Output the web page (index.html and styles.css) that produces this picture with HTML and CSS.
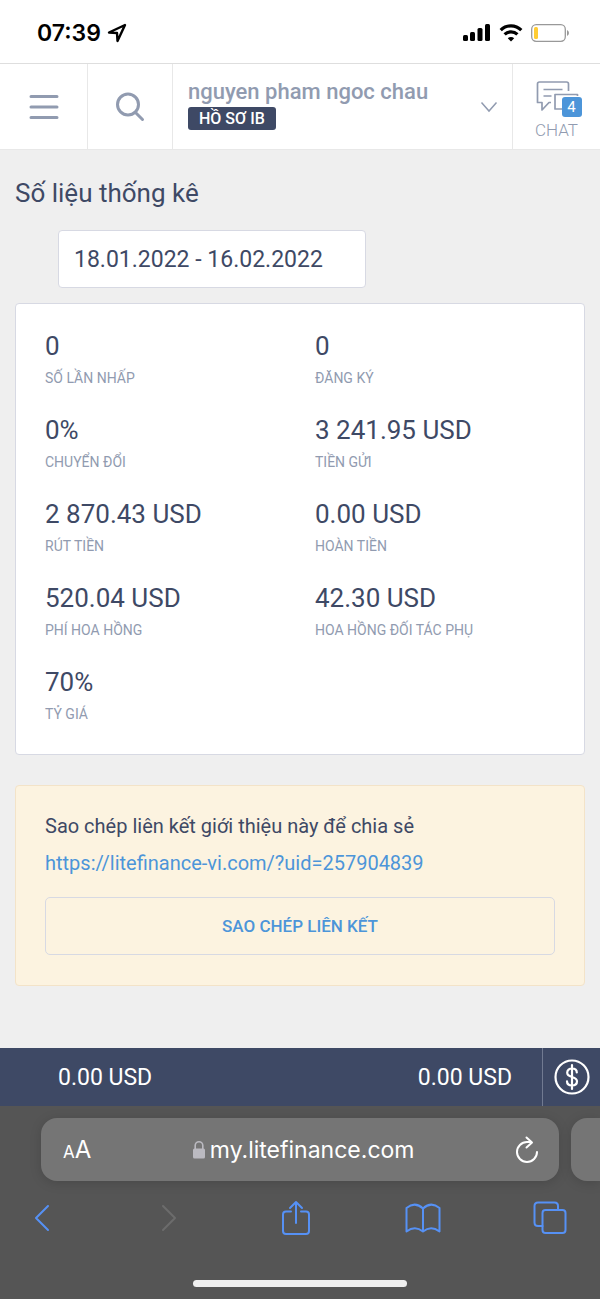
FILE: index.html
```
<!DOCTYPE html>
<html lang="vi">
<head>
    <meta charset="UTF-8">
    <meta name="viewport" content="width=device-width, initial-scale=1.0">
    <title>Số liệu thống kê</title>
    <link rel="stylesheet" href="styles.css">
</head>
<body>
    <div class="status-bar">
        <div class="status-time">
            <span>07:39</span>
            <svg width="20" height="20" viewBox="0 0 20 20" fill="none" stroke="#000" stroke-width="2.4" stroke-linejoin="round"><path d="M18 2L2 9.500l8 .5.500 8z"/></svg>
        </div>
        <div class="status-icons">
            <svg width="28" height="18" viewBox="0 0 28 18"><rect x="0" y="11" width="5" height="6" rx="1.5"/><rect x="7" y="8" width="5" height="9" rx="1.5"/><rect x="14.5" y="4" width="5" height="13" rx="1.5"/><rect x="22" y="0" width="5" height="17" rx="1.5"/></svg>
            <svg width="24" height="18" viewBox="0 0 24 18" fill="none" stroke="#000" stroke-width="3.2"><path d="M1.7 6.2a14.500 14.500 0 0 1 20.6 0"/><path d="M5.6 10.400a9.200 9.200 0 0 1 12.800 0"/><path d="M12 17.500l-3.200-3.200a4.500 4.500 0 0 1 6.400 0z" fill="#000" stroke="none"/></svg>
            <svg width="39" height="18" viewBox="0 0 39 18"><rect x=".7" y=".7" width="33.6" height="16.6" rx="4.5" fill="none" stroke="#999" stroke-width="1.3"/><rect x="3" y="3" width="4" height="12" rx="1.5" fill="#fc3"/><path d="M36 6q2 1 2 3t-2 3z" fill="#999"/></svg>
        </div>
    </div>

    <header class="header">
        <button class="header-button" type="button" aria-label="Menu">
            <svg width="30" height="26" viewBox="0 0 30 26" stroke="#919bb0" stroke-width="3" stroke-linecap="round"><path d="M2 2.500h26M2 13h26M2 23.500h26"/></svg>
        </button>
        <button class="header-button" type="button" aria-label="Tìm kiếm">
            <svg width="30" height="30" viewBox="0 0 30 30" fill="none" stroke="#919bb0" stroke-width="3" stroke-linecap="round"><circle cx="13" cy="12.500" r="10.500"/><path d="M20.500 20.500l7 7"/></svg>
        </button>
        <button class="profile" type="button">
            <span class="profile-info">
                <span class="profile-name">nguyen pham ngoc chau</span>
                <span class="profile-tag">HỒ SƠ IB</span>
            </span>
            <svg width="18" height="12" viewBox="0 0 18 12" fill="none" stroke="#919bb0" stroke-width="1.5"><path d="M1.5 1.500L9 10l7.500-8.500"/></svg>
        </button>
        <button class="header-button chat" type="button">
            <span class="chat-icon">
                <svg width="44" height="32" viewBox="0 0 44 32" fill="none" stroke="#919bb0" stroke-width="1.7" stroke-linejoin="round"><path d="M33.500 11V4q0-2-2-2h-27q-2 0-2 2v18.500H7V30l7-7.500h2M8.500 9.500h19M8.500 16h8"/><path d="M42.500 16v-1.500H20v14.500h14"/></svg>
                <span class="chat-count">4</span>
            </span>
            <span>CHAT</span>
        </button>
    </header>

    <main class="content">
        <h1>Số liệu thống kê</h1>
        <input class="date-range" type="text" value="18.01.2022 - 16.02.2022" aria-label="Khoảng thời gian">

        <dl class="stats">
            <div class="stat"><dd>0</dd><dt>SỐ LẦN NHẤP</dt></div>
            <div class="stat"><dd>0</dd><dt>ĐĂNG KÝ</dt></div>
            <div class="stat"><dd>0%</dd><dt>CHUYỂN ĐỔI</dt></div>
            <div class="stat"><dd>3 241.95 USD</dd><dt>TIỀN GỬI</dt></div>
            <div class="stat"><dd>2 870.43 USD</dd><dt>RÚT TIỀN</dt></div>
            <div class="stat"><dd>0.00 USD</dd><dt>HOÀN TIỀN</dt></div>
            <div class="stat"><dd>520.04 USD</dd><dt>PHÍ HOA HỒNG</dt></div>
            <div class="stat"><dd>42.30 USD</dd><dt>HOA HỒNG ĐỐI TÁC PHỤ</dt></div>
            <div class="stat"><dd>70%</dd><dt>TỶ GIÁ</dt></div>
        </dl>

        <section class="referral">
            <p>Sao chép liên kết giới thiệu này để chia sẻ</p>
            <a href="https://litefinance-vi.com/?uid=257904839">https://litefinance-vi.com/?uid=257904839</a>
            <button type="button">SAO CHÉP LIÊN KẾT</button>
        </section>
    </main>

    <div class="balance-bar">
        <span>0.00 USD</span>
        <span>0.00 USD</span>
        <button type="button" aria-label="Nạp tiền">
            <svg width="36" height="36" viewBox="0 0 36 36" fill="none" stroke="#fff" stroke-width="2.2" stroke-linecap="round"><circle cx="18" cy="18" r="16.500"/><path d="M18 6v24M22.800 13.500c0-2.500-2-4-4.800-4s-4.800 1.500-4.800 4.200c0 5.600 9.800 3 9.800 8.600 0 2.700-2.200 4.200-5 4.200s-5-1.500-5-4.200"/></svg>
        </button>
    </div>

    <footer class="browser">
        <div class="tabs">
            <div class="address">
                <button class="text-size" type="button"><small>A</small>A</button>
                <span class="site">
                    <svg width="14" height="20" viewBox="0 0 14 20"><path d="M3.200 9V5.500a3.800 3.800 0 0 1 7.600 0V9" fill="none" stroke="#bbbac1" stroke-width="1.6"/><rect x="1" y="8.500" width="12" height="10" rx="1.5" fill="#bbbac1"/></svg>
                    my.litefinance.com
                </span>
                <button type="button" aria-label="Tải lại">
                    <svg width="24" height="28" viewBox="0 0 24 28" fill="none" stroke="#fff" stroke-width="2" stroke-linecap="round" stroke-linejoin="round"><path d="M22 16a10 10 0 1 1-10-10h4.500M11.500 1.500L17 6.500l-5.500 5"/></svg>
                </button>
            </div>
            <div class="next-tab"></div>
        </div>
        <nav class="toolbar">
            <button type="button" aria-label="Quay lại">
                <svg width="18" height="30" viewBox="0 0 18 30"><path d="M15 3L3 15l12 12"/></svg>
            </button>
            <button class="disabled" type="button" aria-label="Tiếp" disabled>
                <svg width="18" height="30" viewBox="0 0 18 30"><path d="M3 3l12 12L3 27"/></svg>
            </button>
            <button type="button" aria-label="Chia sẻ">
                <svg width="30" height="36" viewBox="0 0 30 36"><path d="M10 11.500H5q-3 0-3 3V31q0 3 3 3h20q3 0 3-3V14.500q0-3-3-3h-5M15 23V2M9 8l6-6 6 6"/></svg>
            </button>
            <button type="button" aria-label="Dấu trang">
                <svg width="36" height="30" viewBox="0 0 36 30"><path d="M18 5.500Q10-2 1.500 5v23.500Q10 22 18 28.500 26 22 34.500 28.500V5Q26-2 18 5.500zV28"/></svg>
            </button>
            <button type="button" aria-label="Các thẻ">
                <svg width="34" height="34" viewBox="0 0 34 34"><rect x="9.500" y="9" width="23" height="23" rx="3"/><path d="M9.500 25H5q-3.500 0-3.500-3.500V5Q1.500 1.500 5 1.500h16.500Q25 1.500 25 5v4"/></svg>
            </button>
        </nav>
        <div class="home-indicator"></div>
    </footer>
</body>
</html>
```
FILE: styles.css
```
* {
    box-sizing: border-box;
}

body {
    display: flex;
    flex-direction: column;
    min-height: 100vh;
    margin: 0;
    font-family: Roboto, "Liberation Sans", sans-serif;
    background-color: #efefef;
    color: #3e4965;
}

button {
    padding: 0;
    border: none;
    background: none;
    color: inherit;
    font-family: inherit;
    cursor: pointer;
}

svg {
    display: block;
    flex: none;
}

.status-bar {
    display: flex;
    justify-content: space-between;
    align-items: center;
    height: 64px;
    padding: 2px 30px 0 37px;
    background: #fff;
    border-bottom: 1px solid #dedede;
}

.status-time {
    display: flex;
    align-items: center;
    gap: 6px;
    color: #000;
    font-family: Inter, sans-serif;
    font-size: 23px;
    font-weight: 600;
}

.status-icons {
    display: flex;
    gap: 8px;
}

.header {
    display: grid;
    grid-template-columns: 88px 85px 1fr 87px;
    height: 86px;
    background: #fff;
    border-bottom: 1px solid #e8e8e8;
}

.header-button {
    display: flex;
    justify-content: center;
    align-items: center;
    color: #919bb0;
    border-right: 1px solid #e8e8e8;
}

.profile {
    display: flex;
    justify-content: space-between;
    align-items: center;
    padding: 0 14px 0 15px;
    border-right: 1px solid #e8e8e8;
}

.profile-info {
    display: flex;
    flex-direction: column;
    align-items: flex-start;
    gap: 2px;
    padding-bottom: 4px;
}

.profile-name {
    color: #919bb0;
    font-size: 22px;
    font-weight: 500;
    line-height: 26px;
}

.profile-tag {
    padding: 0 11px;
    border-radius: 3px;
    background: #3e4965;
    color: #fff;
    font-size: 16px;
    font-weight: 500;
    line-height: 23px;
}

.chat {
    flex-direction: column;
    gap: 8px;
    padding-top: 6px;
    border-right: none;
    font-size: 17px;
    font-weight: 300;
    line-height: 20px;
}

.chat-icon {
    position: relative;
}

.chat-count {
    position: absolute;
    right: -3px;
    bottom: -5px;
    width: 20px;
    border-radius: 3px;
    background: #4c95d9;
    color: #fff;
    font-size: 15px;
    font-weight: 400;
}

.content {
    padding: 28px 15px;
}

h1 {
    margin: 0 0 22px;
    font-size: 26px;
    font-weight: 400;
    line-height: 30px;
}

.date-range {
    display: block;
    width: 308px;
    height: 58px;
    margin: 0 0 15px 43px;
    padding: 0 15px;
    border: 1px solid #d7d9e3;
    border-radius: 4px;
    background: #fff;
    color: #3e4965;
    font-family: inherit;
    font-size: 23px;
}

.stats {
    display: grid;
    grid-template-columns: 1fr 1fr;
    gap: 24px 30px;
    margin: 0 0 30px;
    padding: 24px 29px 30px;
    border: 1px solid #d7d9e3;
    border-radius: 4px;
    background: #fff;
}

.stat {
    display: flex;
    flex-direction: column;
    gap: 4px;
}

.stat dd {
    margin: 0;
    font-size: 26px;
    line-height: 36px;
}

.stat dt {
    color: #919bb0;
    font-size: 14px;
    line-height: 20px;
}

.referral {
    display: flex;
    flex-direction: column;
    align-items: flex-start;
    padding: 28px 29px 30px;
    border: 1px solid #f3e3c8;
    border-radius: 4px;
    background: #fcf3e0;
    font-size: 20px;
    line-height: 24px;
}

.referral p {
    margin: 0 0 13px;
}

.referral a {
    margin-bottom: 22px;
    color: #4c95d9;
    text-decoration: none;
}

.referral button {
    width: 100%;
    height: 58px;
    border: 1px solid #d7d9e3;
    border-radius: 5px;
    color: #4c95d9;
    font-size: 17px;
    font-weight: 500;
}

.balance-bar {
    display: flex;
    justify-content: space-between;
    align-items: center;
    height: 58px;
    margin-top: auto;
    padding-left: 58px;
    background: #3e4965;
    color: #fff;
    font-size: 23px;
}

.balance-bar span:first-child {
    flex: 1;
}

.balance-bar button {
    display: flex;
    justify-content: center;
    align-items: center;
    width: 58px;
    height: 100%;
    margin-left: 30px;
    border-left: 1px solid #717a91;
}

.browser {
    height: 193px;
    padding-top: 12px;
    background: #555;
    color: #fff;
}

.tabs {
    display: flex;
    gap: 12px;
    height: 63px;
    padding-left: 41px;
}

.address {
    display: flex;
    flex: 1;
    justify-content: space-between;
    align-items: center;
    padding: 0 20px 0 22px;
    border-radius: 16px;
    background: #757575;
    box-shadow: 0 2px 12px rgba(0, 0, 0, 0.15);
    font-family: Inter, sans-serif;
    font-size: 23px;
}

.text-size {
    font-size: 24px;
}

.text-size small {
    font-size: 17px;
}

.site {
    display: flex;
    align-items: center;
    gap: 4px;
}

.next-tab {
    width: 29px;
    border-radius: 16px 0 0 16px;
    background: #757575;
    box-shadow: 0 2px 12px rgba(0, 0, 0, 0.15);
}

.toolbar {
    display: flex;
    justify-content: space-between;
    align-items: center;
    height: 74px;
    padding: 0 32px 0 24px;
}

.toolbar button {
    display: flex;
    justify-content: center;
    width: 36px;
}

.toolbar svg {
    fill: none;
    stroke: #5691f5;
    stroke-width: 2;
    stroke-linecap: round;
    stroke-linejoin: round;
}

.toolbar .disabled svg {
    stroke: #6c6c6c;
}

.home-indicator {
    width: 214px;
    height: 7px;
    margin: 25px auto 0;
    border-radius: 4px;
    background: #efefef;
}
```
